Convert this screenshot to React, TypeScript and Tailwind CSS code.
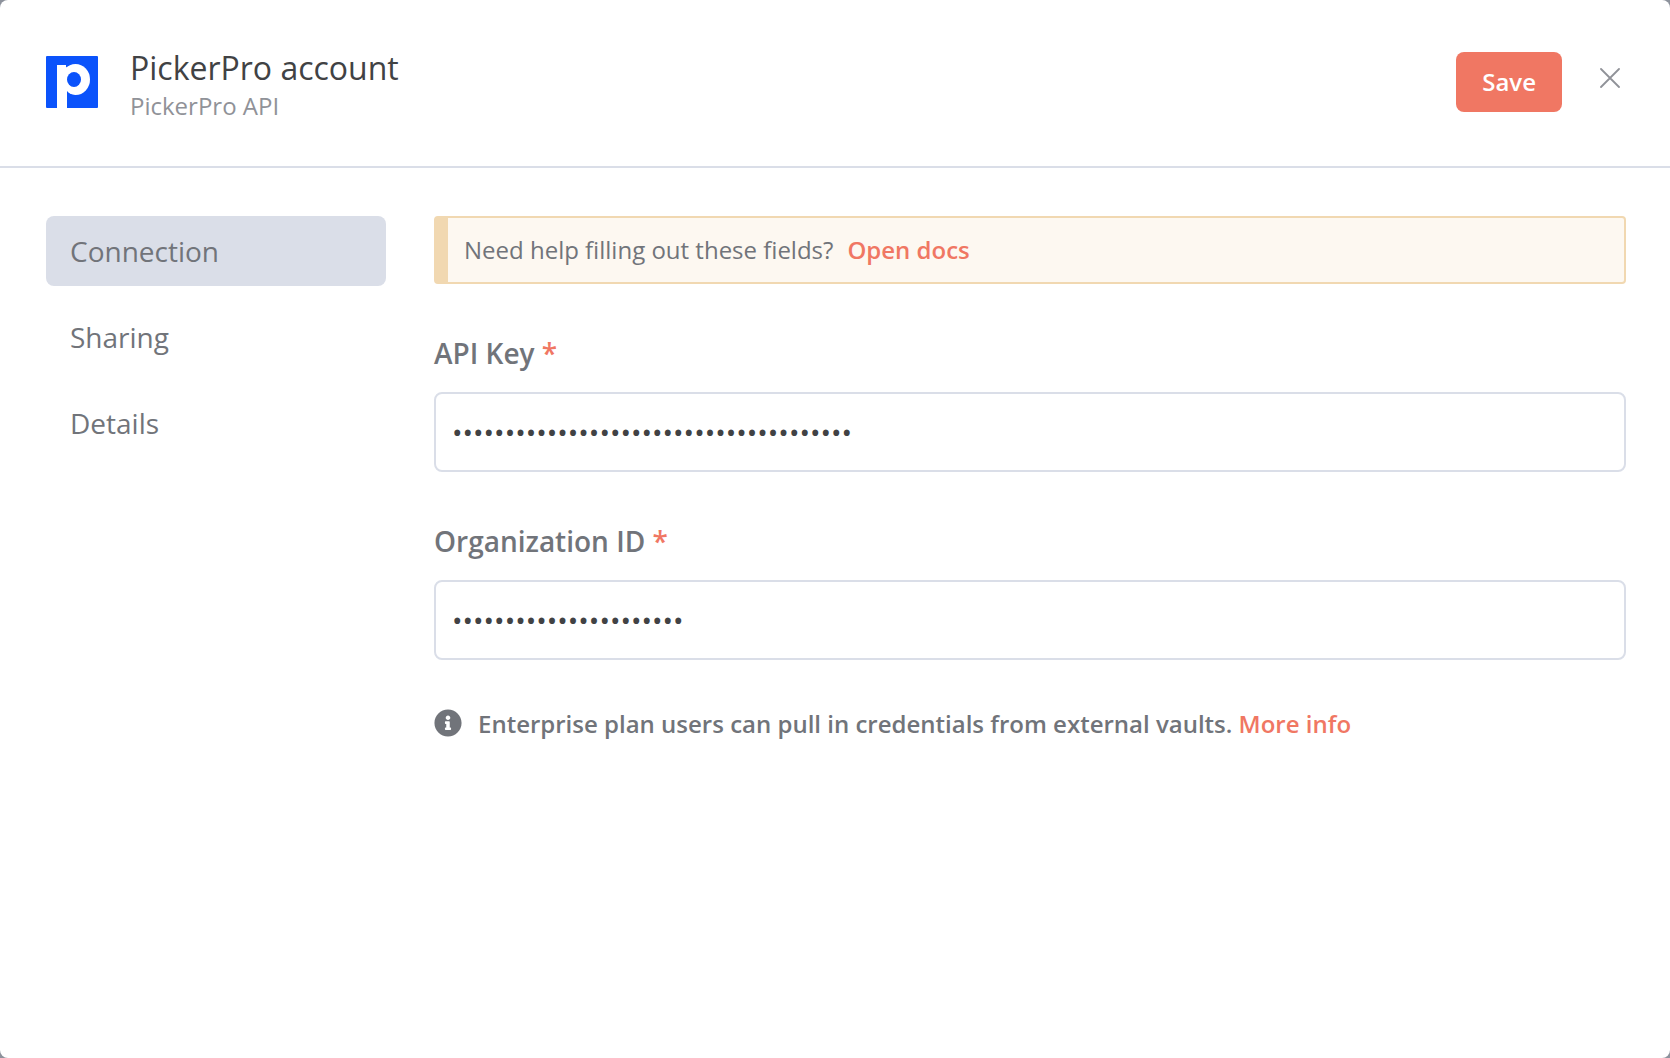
import React, { useState } from 'react';

const tabs = ['Connection', 'Sharing', 'Details'];

function PickerProLogo() {
    return (
        <svg className="mt-2 size-[52px] shrink-0" viewBox="0 0 52 52" aria-hidden="true">
            <rect width="52" height="52" rx="1" fill="#0b53fb" />
            <rect x="11" y="9" width="10" height="43" fill="#fff" />
            <ellipse cx="29.5" cy="23.5" rx="14.5" ry="15.5" fill="#fff" />
            <path d="M11 0h10v9H11z" fill="#0b53fb" />
            <path d="M20 7v4.500l3-2.500V7z" fill="#0b53fb" />
            <path d="M21 52V35c2 2.500 5 4 8 4v13z" fill="#0b53fb" />
            <ellipse cx="28" cy="23.500" rx="7" ry="7.500" fill="#0b53fb" />
        </svg>
    );
}

function CloseIcon() {
    return (
        <svg className="size-5" viewBox="0 0 20 20" fill="none" stroke="#909298" strokeWidth="1.800" strokeLinecap="round" aria-hidden="true">
            <path d="M1 1l18 18M19 1L1 19" />
        </svg>
    );
}

function InfoIcon() {
    return (
        <svg className="mt-[3px] size-7 shrink-0" viewBox="0 0 512 512" fill="#71747a" aria-hidden="true">
            <path d="M256 8C119.043 8 8 119.083 8 256c0 136.997 111.043 248 248 248s248-111.003 248-248C504 119.083 392.957 8 256 8zm0 110c23.196 0 42 18.804 42 42s-18.804 42-42 42-42-18.804-42-42 18.804-42 42-42zm56 254c0 6.627-5.373 12-12 12h-88c-6.627 0-12-5.373-12-12v-24c0-6.627 5.373-12 12-12h12v-64h-12c-6.627 0-12-5.373-12-12v-24c0-6.627 5.373-12 12-12h64c6.627 0 12 5.373 12 12v100h12c6.627 0 12 5.373 12 12v24z" />
        </svg>
    );
}

type FieldProps = { id: string; label: string; initial: string };

function SecretField({ id, label, initial }: FieldProps) {
    const [value, setValue] = useState(initial);
    return (
        <div className="flex flex-col gap-[22px]">
            <label htmlFor={id} className="text-[28px] leading-[34px] font-semibold text-[#71747a]">
                {label} <span className="text-[#f07763]">*</span>
            </label>
            <input
                type="password"
                id={id}
                value={value}
                onChange={(e) => setValue(e.target.value)}
                className="block h-20 w-full rounded-lg border-2 border-[#dadee8] bg-white px-4 text-[28px] text-[#414244] outline-none focus:border-[#f07763]"
                required
            />
        </div>
    );
}

export default function App() {
    const [active, setActive] = useState('Connection');

    return (
        <div className="min-h-screen bg-[#8d929c] font-['Open_Sans',sans-serif]">
            <div className="min-h-screen rounded-lg bg-white">
                <header className="flex items-start justify-between border-b-2 border-[#dadee8] pt-12 pr-12 pb-[42px] pl-[46px]">
                    <div className="flex items-start gap-8">
                        <PickerProLogo />
                        <div>
                            <h1 className="text-[32px] leading-10 text-[#414244]">PickerPro account</h1>
                            <p className="text-2xl leading-9 text-[#909298]">PickerPro API</p>
                        </div>
                    </div>
                    <div className="flex items-start gap-9 pt-1">
                        <button type="button" className="h-[60px] rounded-lg bg-[#f07763] px-[26px] text-2xl font-semibold text-white">Save</button>
                        <button type="button" aria-label="Close" className="mt-3.5 p-0.5">
                            <CloseIcon />
                        </button>
                    </div>
                </header>

                <div className="flex gap-12 pt-12 pr-11 pb-12 pl-[46px]">
                    <nav className="flex w-[340px] shrink-0 flex-col gap-4">
                        {tabs.map((tab) => (
                            <button
                                key={tab}
                                type="button"
                                onClick={() => setActive(tab)}
                                className={`h-[70px] rounded-lg px-6 text-left text-[28px] text-[#71747a] ${tab === active ? 'bg-[#dadee8]' : ''}`}
                            >
                                {tab}
                            </button>
                        ))}
                    </nav>

                    <main className="min-w-0 flex-1">
                        <div className="flex h-[68px] items-center gap-3.5 rounded border-2 border-l-14 border-[#f1d8b1] bg-[#fdf8f1] px-4 text-2xl text-[#71747a]">
                            <span>Need help filling out these fields?</span>
                            <a href="#docs" className="font-semibold text-[#f07763]">Open docs</a>
                        </div>

                        <form className="mt-[52px] flex flex-col gap-[52px]">
                            <SecretField id="api-key" label="API Key" initial={'x'.repeat(38)} />
                            <SecretField id="organization-id" label="Organization ID" initial={'x'.repeat(22)} />
                        </form>

                        <div className="mt-[46px] flex items-start gap-4">
                            <InfoIcon />
                            <p className="text-2xl leading-9 font-semibold text-[#71747a]">
                                Enterprise plan users can pull in credentials from external vaults. <a href="#vaults" className="text-[#f07763]">More info</a>
                            </p>
                        </div>
                    </main>
                </div>
            </div>
        </div>
    );
}
